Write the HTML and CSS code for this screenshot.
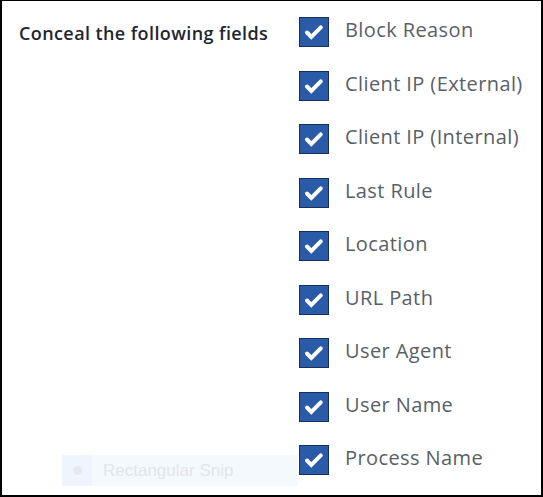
FILE: index.html
```html
<!DOCTYPE html>
<html>
<head>
<meta charset="utf-8">
<link rel="stylesheet" href="styles.css">
</head>
<body>
<div class="frame">
  <div class="label">Conceal the following fields</div>
  <ul class="fields">
    <li class="field"><span class="box"><svg viewBox="0 0 30 30" width="30" height="30"><path d="M8 15.5 L12.3 19.8 L21.8 10.3" fill="none" stroke="#fff" stroke-width="4" stroke-linecap="round" stroke-linejoin="miter"/></svg></span><span class="name">Block Reason</span></li>
    <li class="field"><span class="box"><svg viewBox="0 0 30 30" width="30" height="30"><path d="M8 15.5 L12.3 19.8 L21.8 10.3" fill="none" stroke="#fff" stroke-width="4" stroke-linecap="round" stroke-linejoin="miter"/></svg></span><span class="name">Client IP (External)</span></li>
    <li class="field"><span class="box"><svg viewBox="0 0 30 30" width="30" height="30"><path d="M8 15.5 L12.3 19.8 L21.8 10.3" fill="none" stroke="#fff" stroke-width="4" stroke-linecap="round" stroke-linejoin="miter"/></svg></span><span class="name">Client IP (Internal)</span></li>
    <li class="field"><span class="box"><svg viewBox="0 0 30 30" width="30" height="30"><path d="M8 15.5 L12.3 19.8 L21.8 10.3" fill="none" stroke="#fff" stroke-width="4" stroke-linecap="round" stroke-linejoin="miter"/></svg></span><span class="name">Last Rule</span></li>
    <li class="field"><span class="box"><svg viewBox="0 0 30 30" width="30" height="30"><path d="M8 15.5 L12.3 19.8 L21.8 10.3" fill="none" stroke="#fff" stroke-width="4" stroke-linecap="round" stroke-linejoin="miter"/></svg></span><span class="name">Location</span></li>
    <li class="field"><span class="box"><svg viewBox="0 0 30 30" width="30" height="30"><path d="M8 15.5 L12.3 19.8 L21.8 10.3" fill="none" stroke="#fff" stroke-width="4" stroke-linecap="round" stroke-linejoin="miter"/></svg></span><span class="name">URL Path</span></li>
    <li class="field"><span class="box"><svg viewBox="0 0 30 30" width="30" height="30"><path d="M8 15.5 L12.3 19.8 L21.8 10.3" fill="none" stroke="#fff" stroke-width="4" stroke-linecap="round" stroke-linejoin="miter"/></svg></span><span class="name">User Agent</span></li>
    <li class="field"><span class="box"><svg viewBox="0 0 30 30" width="30" height="30"><path d="M8 15.5 L12.3 19.8 L21.8 10.3" fill="none" stroke="#fff" stroke-width="4" stroke-linecap="round" stroke-linejoin="miter"/></svg></span><span class="name">User Name</span></li>
    <li class="field"><span class="box"><svg viewBox="0 0 30 30" width="30" height="30"><path d="M8 15.5 L12.3 19.8 L21.8 10.3" fill="none" stroke="#fff" stroke-width="4" stroke-linecap="round" stroke-linejoin="miter"/></svg></span><span class="name">Process Name</span></li>
  </ul>
  <div class="snip"><span class="snip-icon"><span class="dot"></span></span><span class="snip-text">Rectangular Snip</span></div>
</div>
</body>
</html>
```
FILE: styles.css
```css
html, body {
  margin: 0;
  padding: 0;
  background: #fff;
}
.frame {
  position: relative;
  box-sizing: border-box;
  width: 543px;
  height: 497px;
  border-top: 1px solid #000;
  border-left: 2px solid #000;
  border-right: 2px solid #000;
  border-bottom: 2px solid #000;
  display: grid;
  grid-template-columns: 280px 1fr;
  padding: 4.5px 0 0 17px;
  font-family: "Open Sans", "Liberation Sans", sans-serif;
}
.label {
  font-size: 18px;
  font-weight: 600;
  color: #1f2630;
  line-height: 24px;
  padding-top: 15.5px;
  letter-spacing: 0.4px;
  white-space: nowrap;
}
.fields {
  list-style: none;
  margin: 0;
  padding: 0;
}
.field {
  display: flex;
  align-items: center;
  height: 53.5px;
}
.box {
  box-sizing: border-box;
  width: 30px;
  height: 30px;
  background: #2a5ba8;
  border: 1px solid #17305a;
  display: flex;
  align-items: center;
  justify-content: center;
  flex: none;
}
.box svg {
  display: block;
  flex: none;
}
.name {
  margin-left: 16px;
  font-size: 20px;
  color: #595f66;
  line-height: 28px;
  padding-bottom: 4px;
  letter-spacing: 0.4px;
}
.snip {
  position: absolute;
  left: 60px;
  top: 454px;
  width: 236px;
  height: 31px;
  background: #f4f9fe;
  display: flex;
  align-items: center;
}
.snip-icon {
  width: 30px;
  height: 31px;
  background: #eef5fe;
  display: flex;
  align-items: center;
  justify-content: center;
}
.dot {
  width: 9px;
  height: 9px;
  border-radius: 50%;
  background: #e6e9ee;
}
.snip-text {
  margin-left: 11px;
  font-family: "Liberation Sans", sans-serif;
  font-size: 17px;
  color: #e3e5e8;
}
```
